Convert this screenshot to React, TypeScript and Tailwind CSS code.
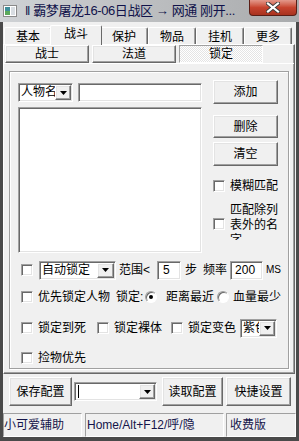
import React from "react";

const raised =
  "bg-[#f0f0f0] border border-t-white border-l-white border-r-[#696969] border-b-[#696969] shadow-[inset_-1px_-1px_#a0a0a0,inset_1px_1px_#e3e3e3]";
const sunken =
  "bg-white border border-t-[#a0a0a0] border-l-[#a0a0a0] border-r-white border-b-white shadow-[inset_1px_1px_#696969,inset_-1px_-1px_#e3e3e3]";

function Arrow({ className = "" }: { className?: string }) {
  return (
    <div className={`${raised} flex items-center justify-center shrink-0 ${className}`}>
      <svg width="7" height="4" viewBox="0 0 7 4">
        <path d="M0 0h7L3.5 4z" fill="#000" />
      </svg>
    </div>
  );
}

function Combo({ text, className = "", arrowW = "w-[16px]" }: { text: string; className?: string; arrowW?: string }) {
  return (
    <div className={`${sunken} flex p-[1px] shrink-0 ${className}`}>
      <div className="flex-1 overflow-hidden whitespace-nowrap pl-[1px] leading-[15px]">{text}</div>
      <Arrow className={`${arrowW} h-full`} />
    </div>
  );
}

function Button({ label, className = "" }: { label: string; className?: string }) {
  return (
    <div className={`${raised} flex items-center justify-center shrink-0 leading-[14px] ${className}`}>
      {label}
    </div>
  );
}

function Check({ className = "" }: { className?: string }) {
  return (
    <div
      className={`w-[12px] h-[12px] shrink-0 bg-white border border-t-[#a0a0a0] border-l-[#a0a0a0] border-r-white border-b-white shadow-[inset_1px_1px_#696969,inset_-1px_-1px_#e3e3e3] ${className}`}
    />
  );
}

function Radio({ on = false, className = "" }: { on?: boolean; className?: string }) {
  return (
    <div
      className={`w-[12px] h-[12px] shrink-0 rounded-full bg-white border border-t-[#a0a0a0] border-l-[#a0a0a0] border-r-white border-b-white shadow-[inset_1px_1px_#696969] flex items-center justify-center ${className}`}
    >
      {on && <div className="w-[4px] h-[4px] rounded-full bg-black" />}
    </div>
  );
}

const tabs = ["基本", "战斗", "保护", "物品", "挂机", "更多"];

export default function App() {
  return (
    <div className="w-[299px] h-[441px] flex flex-col overflow-hidden bg-[#f0f0f0] text-[12px] text-black font-['Liberation_Sans','Noto_Sans_CJK_SC',sans-serif]">
      {/* title bar */}
      <div className="h-[22px] shrink-0 flex items-start bg-gradient-to-r from-[#cfd2d5] via-[#bcbec0] to-[#a9abad]">
        <svg width="14" height="12" viewBox="0 0 14 12" className="ml-[3px] mt-[5px] shrink-0">
          <rect x="0.5" y="0.5" width="13" height="11" fill="#fff" stroke="#8a8a8a" />
          <rect x="2" y="2" width="5" height="8" fill="#3f8f9c" />
          <rect x="2" y="6" width="5" height="4" fill="#5aa85a" />
          <rect x="8" y="2" width="4" height="8" fill="#d8dde2" />
        </svg>
        <div className="ml-[8px] mt-[3px] text-[13px] leading-[16px] tracking-[-0.4px] text-[#10124a] whitespace-nowrap">
          ‖ 霸梦屠龙16-06日战区 → 网通 刚开...
        </div>
        <div className="ml-auto mr-[2px] w-[48px] h-[16px] shrink-0 rounded-b-[4px] border border-t-0 border-[#5a1e16] bg-gradient-to-b from-[#e3998c] via-[#c7442f] to-[#a8321f] flex items-center justify-center">
          <svg width="14" height="11" viewBox="0 0 14 11">
            <path d="M2 1.5l10 8M12 1.5l-10 8" stroke="#3a3a3a" strokeWidth="4" strokeLinecap="square" />
            <path d="M2 1.5l10 8M12 1.5l-10 8" stroke="#fff" strokeWidth="2.2" strokeLinecap="square" />
          </svg>
        </div>
      </div>

      {/* window body */}
      <div className="flex-1 flex flex-col border-l-[3px] border-r-[3px] border-b-[4px] border-[#4a4a4a]">
        {/* outer tabs */}
        <div className="h-[22px] shrink-0 flex items-end pl-[1px]">
          {tabs.map((t, i) =>
            i === 1 ? (
              <div
                key={t}
                className="relative z-10 -mx-[2px] -mb-[1px] w-[52px] h-[20px] bg-[#f0f0f0] rounded-t-[2px] border-l border-t border-r border-l-white border-t-white border-r-[#696969] flex justify-center pt-[1px] leading-[14px]"
              >
                {t}
              </div>
            ) : (
              <div
                key={t}
                className="w-[48px] h-[17px] rounded-t-[2px] border-l border-t border-r border-l-white border-t-white border-r-[#696969] shadow-[inset_-1px_0_#a0a0a0] flex justify-center pt-[2px] leading-[14px]"
              >
                {t}
              </div>
            )
          )}
        </div>

        {/* tab panel */}
        <div className="h-[330px] w-[292px] shrink-0 flex flex-col border border-t-white border-l-white border-r-[#696969] border-b-[#696969] shadow-[inset_-1px_-1px_#a0a0a0]">
          <div className="h-[18px] shrink-0 flex gap-[3px] pl-[1px]">
            <Button label="战士" className="w-[84px] h-[18px]" />
            <Button label="法道" className="w-[84px] h-[18px]" />
            <div className="w-[84px] h-[18px] flex items-center justify-center leading-[14px] border border-t-[#a0a0a0] border-l-[#a0a0a0] border-r-white border-b-white [background-image:repeating-conic-gradient(#ffffff_0_25%,#e4e4e4_0_50%)] [background-size:2px_2px]">
              锁定
            </div>
          </div>

          <div className="flex-1 border-t border-white pl-[5px] pt-[7px]">
            {/* group box */}
            <div className="w-[280px] h-[298px] border border-[#a0a0a0] shadow-[inset_1px_1px_#fff,1px_1px_#fff] flex flex-col">
              <div className="flex">
                <div className="flex flex-col pl-[8px] pt-[11px]">
                  <div className="flex gap-[5px]">
                    <Combo text="人物名" className="w-[55px] h-[19px]" />
                    <div className={`${sunken} w-[124px] h-[19px]`} />
                  </div>
                  <div className={`${sunken} mt-[5px] w-[184px] h-[146px]`} />
                </div>
                <div className="flex flex-col ml-[11px] pt-[8px] w-[66px]">
                  <Button label="添加" className="w-[65px] h-[24px]" />
                  <Button label="删除" className="w-[65px] h-[23px] mt-[11px]" />
                  <Button label="清空" className="w-[65px] h-[24px] mt-[4px]" />
                  <div className="flex items-center mt-[13px] h-[14px]">
                    <Check />
                    <span className="ml-[5px] leading-[14px] whitespace-nowrap">模糊匹配</span>
                  </div>
                  <div className="flex items-center mt-[10px] h-[37px]">
                    <Check className="mt-[5px]" />
                    <div className="ml-[5px] w-[49px] h-[37px] overflow-hidden leading-[15px]">
                      匹配除列表外的名字
                    </div>
                  </div>
                </div>
              </div>

              {/* row A */}
              <div className="flex items-center h-[20px] mt-[7px] pl-[11px]">
                <Check />
                <Combo text="自动锁定" className="ml-[6px] w-[77px] h-[19px]" arrowW="w-[17px]" />
                <span className="ml-[3px] w-[38px] leading-[14px] whitespace-nowrap">范围&lt;</span>
                <div className={`${sunken} w-[24px] h-[19px] flex items-center pl-[5px] leading-[14px]`}>5</div>
                <span className="ml-[4px] leading-[14px]">步</span>
                <span className="ml-[6px] leading-[14px]">频率</span>
                <div className={`${sunken} ml-[3px] w-[33px] h-[19px] flex items-center pl-[4px] leading-[14px]`}>200</div>
                <span className="ml-[3px] text-[10px] leading-[14px]">MS</span>
              </div>

              {/* row B */}
              <div className="flex items-center h-[16px] mt-[9px] pl-[11px]">
                <Check />
                <span className="ml-[5px] leading-[14px] whitespace-nowrap">优先锁定人物</span>
                <span className="ml-[6px] w-[29px] leading-[14px] whitespace-nowrap">锁定:</span>
                <Radio on />
                <span className="ml-[9px] leading-[14px] whitespace-nowrap">距离最近</span>
                <Radio className="ml-[3px]" />
                <span className="ml-[4px] leading-[14px] whitespace-nowrap">血量最少</span>
              </div>

              {/* row C */}
              <div className="flex items-center h-[20px] mt-[13px] pl-[11px]">
                <Check />
                <span className="ml-[5px] leading-[14px] whitespace-nowrap">锁定到死</span>
                <Check className="ml-[11px]" />
                <span className="ml-[5px] leading-[14px] whitespace-nowrap">锁定裸体</span>
                <Check className="ml-[9px]" />
                <span className="ml-[5px] leading-[14px] whitespace-nowrap">锁定变色</span>
                <Combo text="紫色" className="ml-[4px] w-[37px] h-[19px]" />
              </div>

              {/* row D */}
              <div className="flex items-center h-[16px] mt-[12px] pl-[11px]">
                <Check />
                <span className="ml-[5px] leading-[14px] whitespace-nowrap">捡物优先</span>
              </div>
            </div>
          </div>
        </div>

        {/* bottom buttons */}
        <div className="h-[29px] mt-[3px] shrink-0 flex items-center pl-[6px]">
          <Button label="保存配置" className="w-[63px] h-[29px]" />
          <div className={`${sunken} ml-[2px] w-[83px] h-[19px] flex p-[1px]`}>
            <div className="flex-1 flex items-center pl-[2px]">
              <div className="w-[1px] h-[13px] bg-black" />
            </div>
            <Arrow className="w-[16px] h-full" />
          </div>
          <Button label="读取配置" className="ml-[5px] w-[61px] h-[29px]" />
          <Button label="快捷设置" className="ml-[3px] w-[65px] h-[29px]" />
        </div>

        {/* status bar */}
        <div className="h-[24px] mt-[7px] shrink-0 flex text-[#15154a]">
          <div className="w-[79px] h-full border border-t-[#a0a0a0] border-l-[#a0a0a0] border-r-white border-b-white flex items-center leading-[14px] whitespace-nowrap">
            小可爱辅助
          </div>
          <div className="ml-[3px] w-[139px] h-full border border-t-[#a0a0a0] border-l-[#a0a0a0] border-r-white border-b-white flex items-center pl-[1px] leading-[14px] whitespace-nowrap">
            Home/Alt+F12/呼/隐
          </div>
          <div className="ml-[2px] w-[70px] h-full border border-t-[#a0a0a0] border-l-[#a0a0a0] border-r-white border-b-white flex items-center pl-[3px] leading-[14px] whitespace-nowrap">
            收费版
          </div>
        </div>
      </div>
    </div>
  );
}
